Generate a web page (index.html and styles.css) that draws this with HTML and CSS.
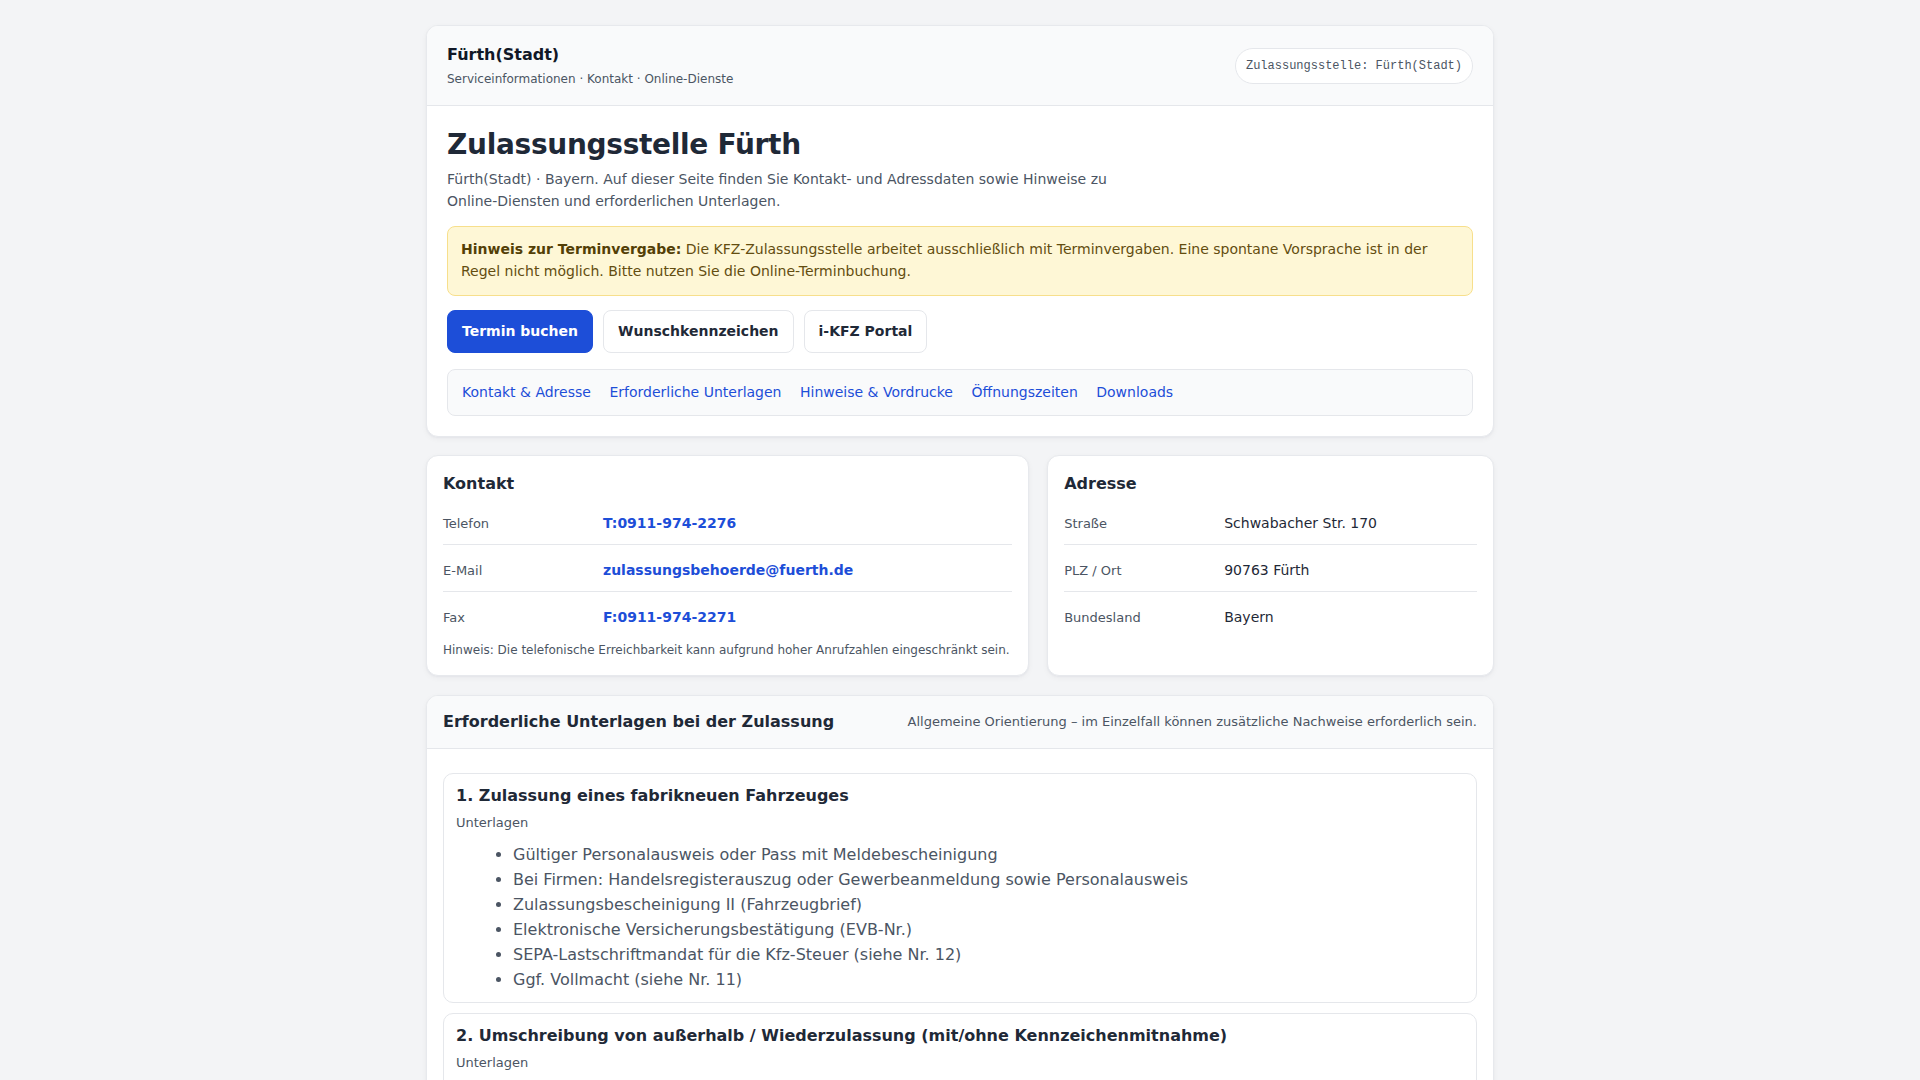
FILE: index.html
```html
<!DOCTYPE html>
<html lang="de">
<head>
<meta charset="utf-8">
<title>Zulassungsstelle Fürth</title>
<link rel="stylesheet" href="styles.css">
</head>
<body>
<div class="page">
  <section class="card hero">
    <header class="hero-head">
      <div>
        <div class="site-name">Fürth(Stadt)</div>
        <div class="site-sub">Serviceinformationen · Kontakt · Online-Dienste</div>
      </div>
      <span class="badge">Zulassungsstelle: Fürth(Stadt)</span>
    </header>
    <div class="hero-body">
      <h1>Zulassungsstelle Fürth</h1>
      <p class="lead">Fürth(Stadt) · Bayern. Auf dieser Seite finden Sie Kontakt- und Adressdaten sowie Hinweise zu Online-Diensten und erforderlichen Unterlagen.</p>
      <div class="alert"><strong>Hinweis zur Terminvergabe:</strong> Die KFZ-Zulassungsstelle arbeitet ausschließlich mit Terminvergaben. Eine spontane Vorsprache ist in der Regel nicht möglich. Bitte nutzen Sie die Online-Terminbuchung.</div>
      <div class="actions">
        <a class="btn btn-primary" href="#">Termin buchen</a>
        <a class="btn" href="#">Wunschkennzeichen</a>
        <a class="btn" href="#">i-KFZ Portal</a>
      </div>
      <nav class="subnav">
        <a href="#kontakt">Kontakt &amp; Adresse</a>
        <a href="#unterlagen">Erforderliche Unterlagen</a>
        <a href="#hinweise">Hinweise &amp; Vordrucke</a>
        <a href="#zeiten">Öffnungszeiten</a>
        <a href="#downloads">Downloads</a>
      </nav>
    </div>
  </section>

  <div class="info-grid" id="kontakt">
    <section class="card info-card">
      <h2>Kontakt</h2>
      <dl class="rows">
        <div class="row"><dt class="label">Telefon</dt><dd class="value"><a href="#">T:0911-974-2276</a></dd></div>
        <div class="row"><dt class="label">E-Mail</dt><dd class="value"><a href="#">zulassungsbehoerde@fuerth.de</a></dd></div>
        <div class="row"><dt class="label">Fax</dt><dd class="value"><a href="#">F:0911-974-2271</a></dd></div>
      </dl>
      <p class="hint">Hinweis: Die telefonische Erreichbarkeit kann aufgrund hoher Anrufzahlen eingeschränkt sein.</p>
    </section>
    <section class="card info-card">
      <h2>Adresse</h2>
      <dl class="rows">
        <div class="row"><dt class="label">Straße</dt><dd class="value">Schwabacher Str. 170</dd></div>
        <div class="row"><dt class="label">PLZ / Ort</dt><dd class="value">90763 Fürth</dd></div>
        <div class="row"><dt class="label">Bundesland</dt><dd class="value">Bayern</dd></div>
      </dl>
    </section>
  </div>

  <section class="card docs" id="unterlagen">
    <header class="docs-head">
      <h2>Erforderliche Unterlagen bei der Zulassung</h2>
      <span class="docs-note">Allgemeine Orientierung – im Einzelfall können zusätzliche Nachweise erforderlich sein.</span>
    </header>
    <div class="docs-body">
      <article class="doc-item">
        <h3>1. Zulassung eines fabrikneuen Fahrzeuges</h3>
        <div class="doc-sub">Unterlagen</div>
        <ul>
          <li>Gültiger Personalausweis oder Pass mit Meldebescheinigung</li>
          <li>Bei Firmen: Handelsregisterauszug oder Gewerbeanmeldung sowie Personalausweis</li>
          <li>Zulassungsbescheinigung II (Fahrzeugbrief)</li>
          <li>Elektronische Versicherungsbestätigung (EVB-Nr.)</li>
          <li>SEPA-Lastschriftmandat für die Kfz-Steuer (siehe Nr. 12)</li>
          <li>Ggf. Vollmacht (siehe Nr. 11)</li>
        </ul>
      </article>
      <article class="doc-item">
        <h3>2. Umschreibung von außerhalb / Wiederzulassung (mit/ohne Kennzeichenmitnahme)</h3>
        <div class="doc-sub">Unterlagen</div>
        <ul>
          <li>Gültiger Personalausweis oder Pass mit Meldebescheinigung</li>
          <li>Zulassungsbescheinigung I (Fahrzeugschein)</li>
          <li>Zulassungsbescheinigung II (Fahrzeugbrief)</li>
          <li>Nachweis über eine gültige Hauptuntersuchung (HU)</li>
          <li>Elektronische Versicherungsbestätigung (EVB-Nr.)</li>
          <li>SEPA-Lastschriftmandat für die Kfz-Steuer (siehe Nr. 12)</li>
          <li>Bisherige Kennzeichenschilder (bei Kennzeichenwechsel)</li>
        </ul>
      </article>
    </div>
  </section>
</div>
</body>
</html>
```

FILE: styles.css
```css
* { box-sizing: border-box; }

body {
  margin: 0;
  background: #f3f4f6;
  font-family: "DejaVu Sans", "Noto Sans", sans-serif;
  color: #1f2937;
}

a { text-decoration: none; }

.page {
  max-width: 1068px;
  margin: 0 auto;
  padding: 25px 0 40px;
}

.card {
  background: #ffffff;
  border: 1px solid #e7e9ed;
  border-radius: 12px;
  box-shadow: 0 1px 2px rgba(16, 24, 40, 0.04), 0 2px 6px rgba(16, 24, 40, 0.04);
  overflow: hidden;
}

/* hero */
.hero-head {
  display: flex;
  justify-content: space-between;
  align-items: center;
  padding: 17px 20px 17px;
  background: #f9fafb;
  border-bottom: 1px solid #e5e7eb;
}

.site-name {
  font-size: 16px;
  font-weight: 700;
  line-height: 24px;
  color: #111827;
}

.site-sub {
  margin-top: 3px;
  font-size: 12px;
  line-height: 18px;
  color: #4b5563;
}

.badge {
  padding: 8px 10px;
  border: 1px solid #e5e7eb;
  border-radius: 999px;
  background: #ffffff;
  font-family: "Liberation Mono", "DejaVu Sans Mono", monospace;
  font-size: 12px;
  line-height: 18px;
  color: #4b5563;
}

.hero-body {
  padding: 22px 20px 20px;
}

h1 {
  margin: 0;
  font-size: 28px;
  line-height: 1.2;
  font-weight: 700;
  letter-spacing: -0.3px;
  color: #1f2937;
}

.lead {
  margin: 6px 0 0;
  max-width: 680px;
  font-size: 14px;
  line-height: 22px;
  color: #4b5563;
}

.alert {
  margin-top: 14px;
  padding: 11px 13px 13px;
  background: #fef7d6;
  border: 1px solid #f7df8c;
  border-radius: 8px;
  font-size: 14px;
  line-height: 22px;
  color: #634d10;
}

.alert strong { color: #533f06; }

.actions {
  display: flex;
  gap: 10px;
  margin-top: 14px;
}

.btn {
  display: inline-block;
  padding: 10px 14px;
  border: 1px solid #e5e7eb;
  border-radius: 8px;
  background: #ffffff;
  font-size: 14px;
  font-weight: 700;
  line-height: 21px;
  color: #1f2937;
}

.btn-primary {
  background: #1d4ed8;
  border-color: #1d4ed8;
  color: #ffffff;
}

.subnav {
  display: flex;
  gap: 18.5px;
  margin-top: 16px;
  padding: 12px 14px;
  background: #f9fafb;
  border: 1px solid #e5e7eb;
  border-radius: 8px;
  font-size: 14px;
  line-height: 21px;
}

.subnav a { color: #1d4ed8; }

/* info grid */
.info-grid {
  display: grid;
  grid-template-columns: 1.35fr 1fr;
  gap: 18px;
  margin-top: 18px;
}

.info-card {
  padding: 16px;
}

.info-card h2 {
  margin: 0 0 2px;
  font-size: 16px;
  line-height: 24px;
  font-weight: 700;
  color: #1f2937;
}

.rows { margin: 0; }

.row {
  display: grid;
  grid-template-columns: 160px 1fr;
  align-items: baseline;
  padding: 15px 0 10px;
  border-bottom: 1px solid #e5e7eb;
}

.row:last-child { border-bottom: none; }

.label {
  font-size: 13px;
  line-height: 19px;
  color: #4b5563;
}

.value {
  margin: 0;
  font-size: 14px;
  line-height: 21px;
  color: #1f2937;
}

.value a {
  font-weight: 700;
  color: #1d4ed8;
}

.hint {
  margin: 3px 0 0;
  font-size: 12px;
  line-height: 18px;
  color: #4b5563;
}

/* docs */
.docs { margin-top: 19px; }

.docs-head {
  display: flex;
  justify-content: space-between;
  align-items: center;
  padding: 14px 16px;
  background: #f9fafb;
  border-bottom: 1px solid #e5e7eb;
}

.docs-head h2 {
  margin: 0;
  font-size: 16px;
  line-height: 24px;
  font-weight: 700;
  color: #1f2937;
}

.docs-note {
  font-size: 13px;
  line-height: 19px;
  color: #4b5563;
}

.docs-body {
  padding: 24px 16px 16px;
}

.doc-item {
  padding: 10px 12px;
  border: 1px solid #e5e7eb;
  border-radius: 10px;
  margin-bottom: 10px;
}

.doc-item h3 {
  margin: 0;
  font-size: 16px;
  line-height: 24px;
  font-weight: 700;
  color: #1f2937;
}

.doc-sub {
  margin-top: 5px;
  font-size: 13px;
  line-height: 19px;
  color: #4b5563;
}

.doc-item ul {
  margin: 10px 0 0;
  padding-left: 57px;
  font-size: 16px;
  line-height: 25px;
  color: #4b5563;
}
```
